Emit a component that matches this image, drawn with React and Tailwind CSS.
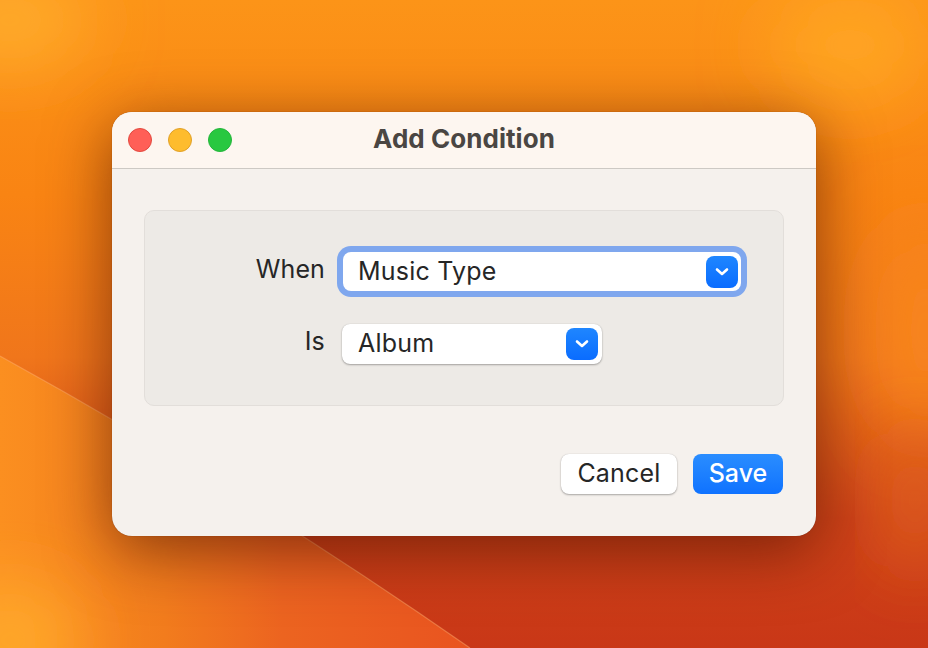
import React from 'react';

function Wallpaper() {
    return (
        <svg className="absolute inset-0" width="928" height="648" viewBox="0 0 928 648">
            <defs>
                <linearGradient id="base" x1="0" y1="0" x2="0" y2="1">
                    <stop offset="0" stopColor="#fc9418" />
                    <stop offset="0.3" stopColor="#f98413" />
                    <stop offset="0.55" stopColor="#f0761b" />
                    <stop offset="0.8" stopColor="#cf4318" />
                    <stop offset="1" stopColor="#c93717" />
                </linearGradient>
                <linearGradient id="low" x1="0" y1="0" x2="1" y2="0">
                    <stop offset="0" stopColor="#fb8f20" />
                    <stop offset="0.35" stopColor="#f27c1d" />
                    <stop offset="0.6" stopColor="#ec6420" />
                    <stop offset="1" stopColor="#e95420" />
                </linearGradient>
                <filter id="soft" x="-50%" y="-50%" width="200%" height="200%">
                    <feGaussianBlur stdDeviation="34" />
                </filter>
            </defs>
            <rect width="928" height="648" fill="url(#base)" />
            <ellipse cx="850" cy="45" rx="80" ry="60" fill="#ffa421" filter="url(#soft)" />
            <ellipse cx="10" cy="20" rx="80" ry="50" fill="#ffab2c" filter="url(#soft)" />
            <ellipse cx="925" cy="330" rx="50" ry="110" fill="#f8851d" filter="url(#soft)" />
            <ellipse cx="915" cy="500" rx="30" ry="70" fill="#e0601f" filter="url(#soft)" />
            <path d="M0 356 Q240 488 470 648 L0 648 Z" fill="url(#low)" />
            <ellipse cx="10" cy="640" rx="70" ry="60" fill="#ffa82c" filter="url(#soft)" />
            <path d="M0 356 Q240 488 470 648" stroke="#ffb070" strokeWidth="1.2" fill="none" opacity="0.45" />
        </svg>
    );
}

function Chevron() {
    return (
        <span className="flex h-8 w-8 items-center justify-center rounded-[8px] bg-gradient-to-b from-[#1f86ff] to-[#0a6cff]">
            <svg width="16" height="12" viewBox="0 0 16 12" fill="none">
                <path d="M3 3.5 L8 8 L13 3.5" stroke="#fff" strokeWidth="2.6" strokeLinecap="round" strokeLinejoin="round" />
            </svg>
        </span>
    );
}

function Select({ value, className, textClass }) {
    return (
        <div className={`flex items-center justify-between rounded-[8px] bg-white text-[25px] leading-none tracking-[0.2px] text-[#262626] ${className}`}>
            <span className={textClass}>{value}</span>
            <Chevron />
        </div>
    );
}

function App() {
    return (
        <div className="relative flex h-[648px] w-[928px] items-center justify-center overflow-hidden font-['Inter','Liberation_Sans',sans-serif]">
            <Wallpaper />
            <div className="relative h-[424px] w-[704px] overflow-hidden rounded-[20px] bg-[#f5f1ed] shadow-[0_14px_64px_rgba(70,15,0,0.62),0_0_1px_rgba(60,20,0,0.6)]">
                <div className="relative flex h-[57px] items-center justify-center border-b border-[#cdc9c4] bg-[#fdf6f0]">
                    <div className="absolute left-4 top-4 flex gap-4">
                        <span className="h-6 w-6 rounded-full border border-[#e2493f] bg-[#ff5f57]" />
                        <span className="h-6 w-6 rounded-full border border-[#e0a028] bg-[#febc2e]" />
                        <span className="h-6 w-6 rounded-full border border-[#24b53b] bg-[#28c840]" />
                    </div>
                    <h1 className="-mt-[3px] text-[26px] font-bold tracking-[0.05px] text-[#4a4643]">Add Condition</h1>
                </div>
                <div className="mx-8 mt-[41px] flex h-[196px] flex-col rounded-[10px] border border-[#e2deda] bg-[#edeae6] pt-[41px]">
                    <div className="flex items-center">
                        <label className="mr-[18px] -mt-[3px] w-[180px] text-right text-[25px] tracking-[0.1px] text-[#262626]">When</label>
                        <Select value="Music Type" className="h-[39px] w-[398px] pl-[15px] pr-[3px] ring-[6px] ring-[#7fa7ee]" />
                    </div>
                    <div className="mt-[33px] flex items-center">
                        <label className="mr-[17px] -mt-[5px] w-[180px] text-right text-[25px] tracking-[0.2px] text-[#262626]">Is</label>
                        <Select value="Album" textClass="-mt-[2px]" className="h-[40px] w-[260px] pl-[16px] pr-1 shadow-[0_1px_2px_rgba(0,0,0,0.3),0_0_1px_rgba(0,0,0,0.2)]" />
                    </div>
                </div>
                <div className="mr-[33px] mt-[48px] flex justify-end gap-4">
                    <button className="h-10 w-[116px] rounded-[8px] bg-white text-[25px] tracking-[0.2px] text-[#262626] shadow-[0_1px_2px_rgba(0,0,0,0.3),0_0_1px_rgba(0,0,0,0.2)]">Cancel</button>
                    <button className="h-10 w-[90px] rounded-[8px] bg-gradient-to-b from-[#2a8dff] to-[#0f72ff] text-[25px] font-medium text-white">Save</button>
                </div>
            </div>
        </div>
    );
}

export default App;
